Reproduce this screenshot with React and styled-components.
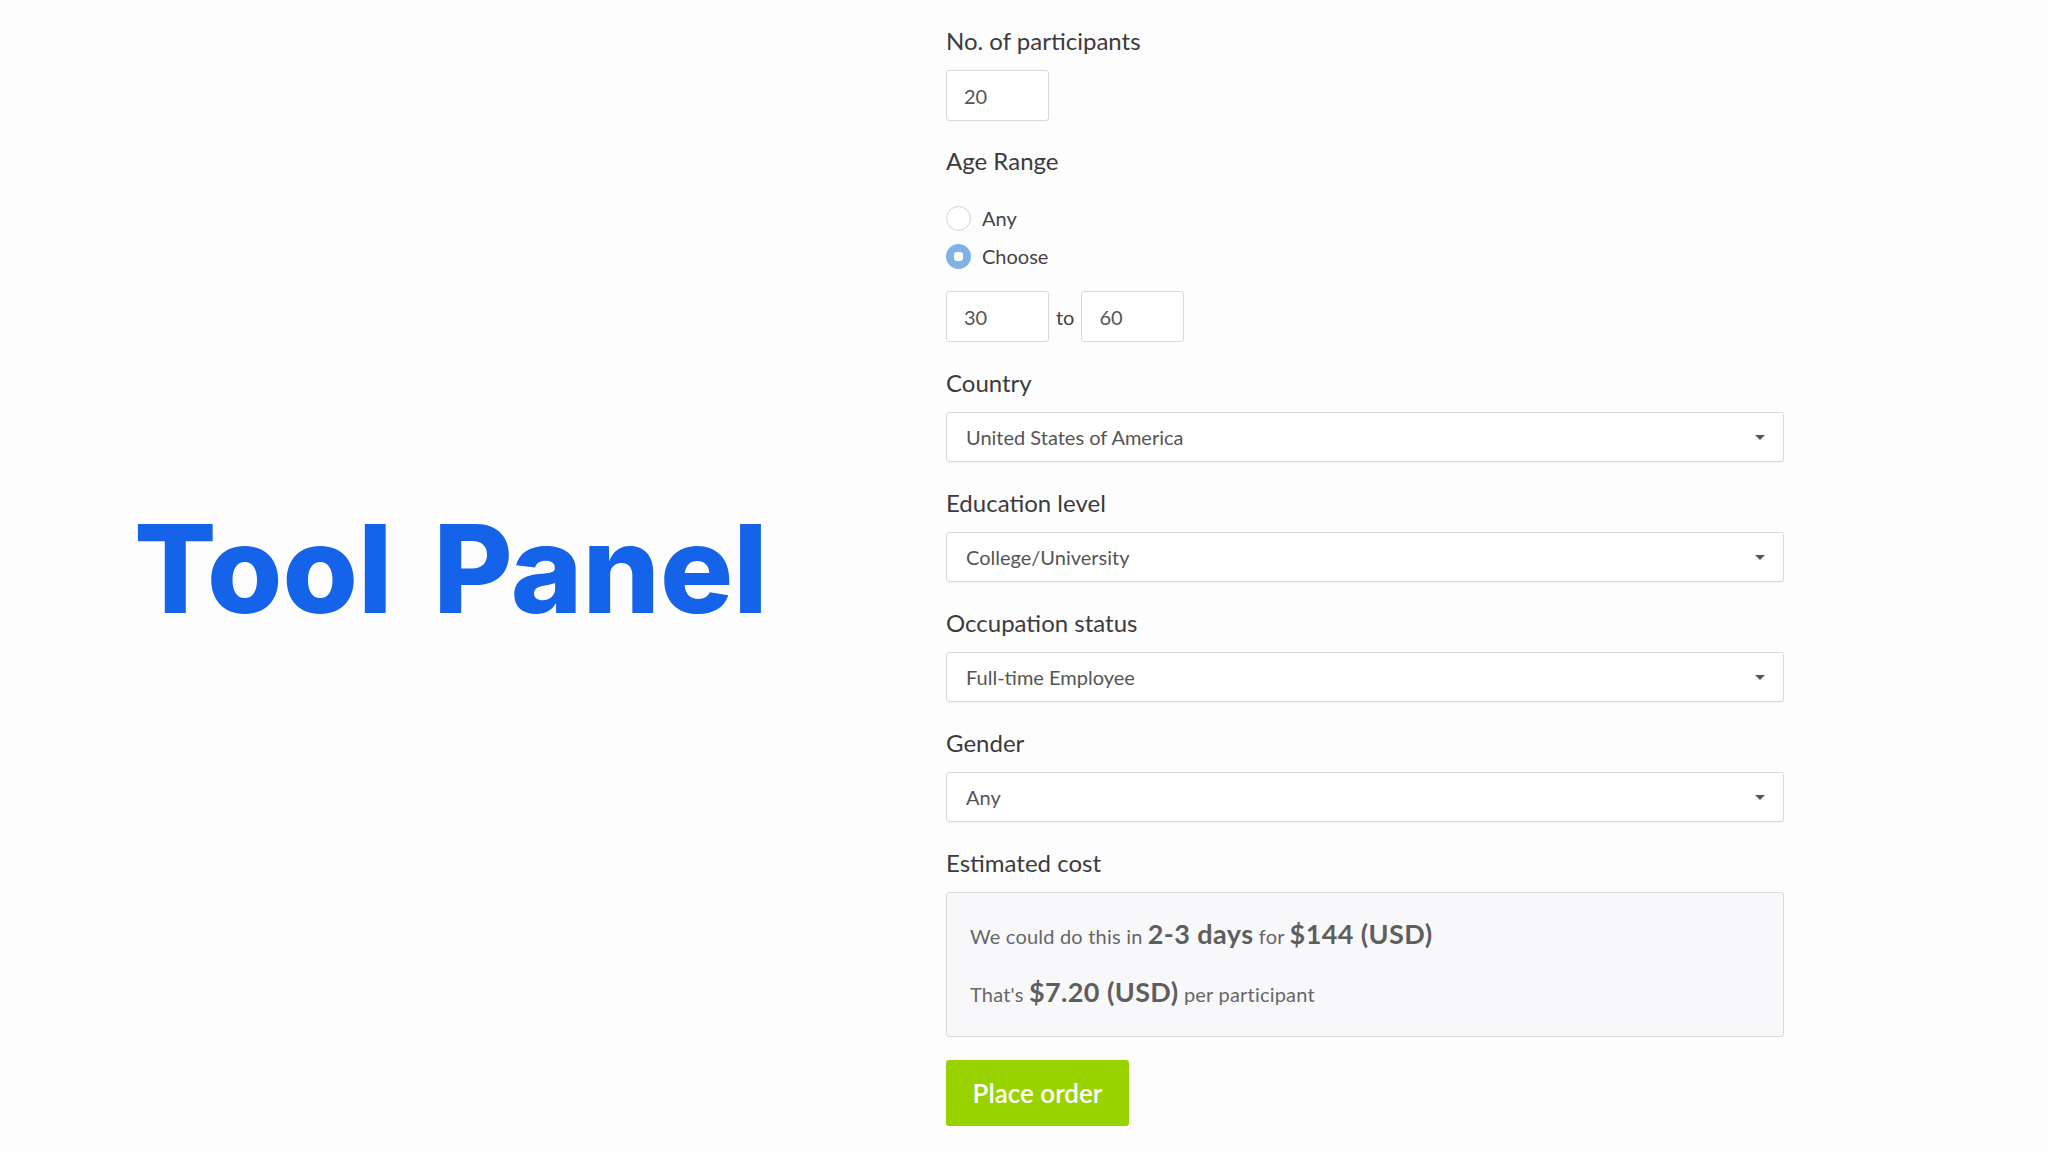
import styled, { createGlobalStyle } from "styled-components";

const GlobalStyle = createGlobalStyle`
  html, body {
    margin: 0;
    padding: 0;
    background-color: #fdfdfe;
  }
  body {
    font-family: Lato, "Open Sans", Arial, sans-serif;
    color: #3c3c3c;
  }
`;

const Page = styled.div`
  display: flex;
  width: 2048px;
  height: 1152px;
  overflow: hidden;
`;

const Hero = styled.div`
  width: 946px;
  display: flex;
  align-items: center;
  padding-left: 134px;
  padding-bottom: 14px;
  box-sizing: border-box;
`;

const Title = styled.h1`
  margin: 0;
  font-family: Inter, Lato, sans-serif;
  font-size: 122px;
  font-weight: 800;
  word-spacing: 14px;
  color: #1463e9;
  line-height: 1;
`;

const Form = styled.div`
  width: 838px;
  padding-top: 26px;
  display: flex;
  flex-direction: column;
`;

const Field = styled.div`
  display: flex;
  flex-direction: column;
  align-items: flex-start;
  margin-bottom: ${(p) => p.$gap ?? 26}px;
`;

const Label = styled.label`
  font-size: 24px;
  line-height: 30px;
  color: #3b3b3b;
  margin-bottom: ${(p) => p.$gap ?? 14}px;
`;

const SmallInput = styled.div`
  width: 103px;
  height: 51px;
  box-sizing: border-box;
  border: 1.5px solid #d9d9d9;
  border-radius: 3px;
  background: #fff;
  font-size: 20px;
  color: #555;
  padding-left: 17px;
  display: flex;
  align-items: center;
`;

const RadioList = styled.div`
  display: flex;
  flex-direction: column;
  margin-top: 23px;
  margin-bottom: 16px;
`;

const RadioRow = styled.div`
  height: 38px;
  display: flex;
  align-items: center;
  gap: 11px;
  font-size: 20px;
  color: #444;
`;

const RadioDot = styled.span`
  width: 25px;
  height: 25px;
  box-sizing: border-box;
  border-radius: 50%;
  border: ${(p) => (p.$checked ? "none" : "1.5px solid #d4d4d4")};
  background: ${(p) => (p.$checked ? "#7fb3e6" : "#fff")};
  display: flex;
  align-items: center;
  justify-content: center;

  &::after {
    content: "";
    display: ${(p) => (p.$checked ? "block" : "none")};
    width: 9px;
    height: 9px;
    border-radius: 3px;
    background: #fff;
  }
`;

const RangeRow = styled.div`
  display: flex;
  align-items: center;
  gap: 6px;
`;

const RangeTo = styled.span`
  font-size: 20px;
  color: #444;
  padding: 0 1px;
`;

const Select = styled.div`
  width: 838px;
  height: 50px;
  box-sizing: border-box;
  border: 1.5px solid #d9d9d9;
  border-radius: 3px;
  background: #fff;
  box-shadow: 0 1px 1px rgba(0, 0, 0, 0.04);
  display: flex;
  align-items: center;
  justify-content: space-between;
  padding: 0 18px 0 19px;
  font-size: 20px;
  color: #555;
`;

const Caret = styled.span`
  width: 0;
  height: 0;
  border-left: 5px solid transparent;
  border-right: 5px solid transparent;
  border-top: 5px solid #555;
`;

const CostBox = styled.div`
  width: 838px;
  height: 145px;
  box-sizing: border-box;
  border: 1.5px solid #dadada;
  border-radius: 3px;
  background: #f8f8fa;
  padding: 24px 23px 0;
  color: #666;
`;

const CostLine = styled.p`
  margin: 0;
  font-size: 20px;
  letter-spacing: 0.2px;
  line-height: ${(p) => p.$lh}px;
  white-space: nowrap;
`;

const Strong = styled.b`
  font-size: 27px;
  font-weight: 700;
  letter-spacing: 0.4px;
  color: #5e5e5e;
`;

const OrderButton = styled.button`
  margin-top: 23px;
  width: 183px;
  height: 66px;
  border: none;
  border-radius: 3px;
  background: #98d300;
  color: #fff;
  font-family: Lato, sans-serif;
  font-size: 26px;
  font-weight: 600;
  padding: 0;
  cursor: pointer;
`;

const selects = [
  ["Country", "United States of America"],
  ["Education level", "College/University"],
  ["Occupation status", "Full-time Employee"],
  ["Gender", "Any"],
];

function App() {
  return (
    <>
      <GlobalStyle />
      <Page>
        <Hero>
          <Title>Tool Panel</Title>
        </Hero>
        <Form>
          <Field $gap={25}>
            <Label>No. of participants</Label>
            <SmallInput>20</SmallInput>
          </Field>
          <Field>
            <Label $gap={0}>Age Range</Label>
            <RadioList>
              <RadioRow>
                <RadioDot />
                Any
              </RadioRow>
              <RadioRow>
                <RadioDot $checked />
                Choose
              </RadioRow>
            </RadioList>
            <RangeRow>
              <SmallInput>30</SmallInput>
              <RangeTo>to</RangeTo>
              <SmallInput>60</SmallInput>
            </RangeRow>
          </Field>
          {selects.map(([label, value]) => (
            <Field key={label}>
              <Label>{label}</Label>
              <Select>
                {value}
                <Caret />
              </Select>
            </Field>
          ))}
          <Field $gap={0}>
            <Label>Estimated cost</Label>
            <CostBox>
              <CostLine $lh={34}>
                We could do this in <Strong>2-3 days</Strong> for{" "}
                <Strong>$144 (USD)</Strong>
              </CostLine>
              <CostLine $lh={78}>
                That's <Strong>$7.20 (USD)</Strong> per participant
              </CostLine>
            </CostBox>
          </Field>
          <OrderButton>Place order</OrderButton>
        </Form>
      </Page>
    </>
  );
}

export default App;
